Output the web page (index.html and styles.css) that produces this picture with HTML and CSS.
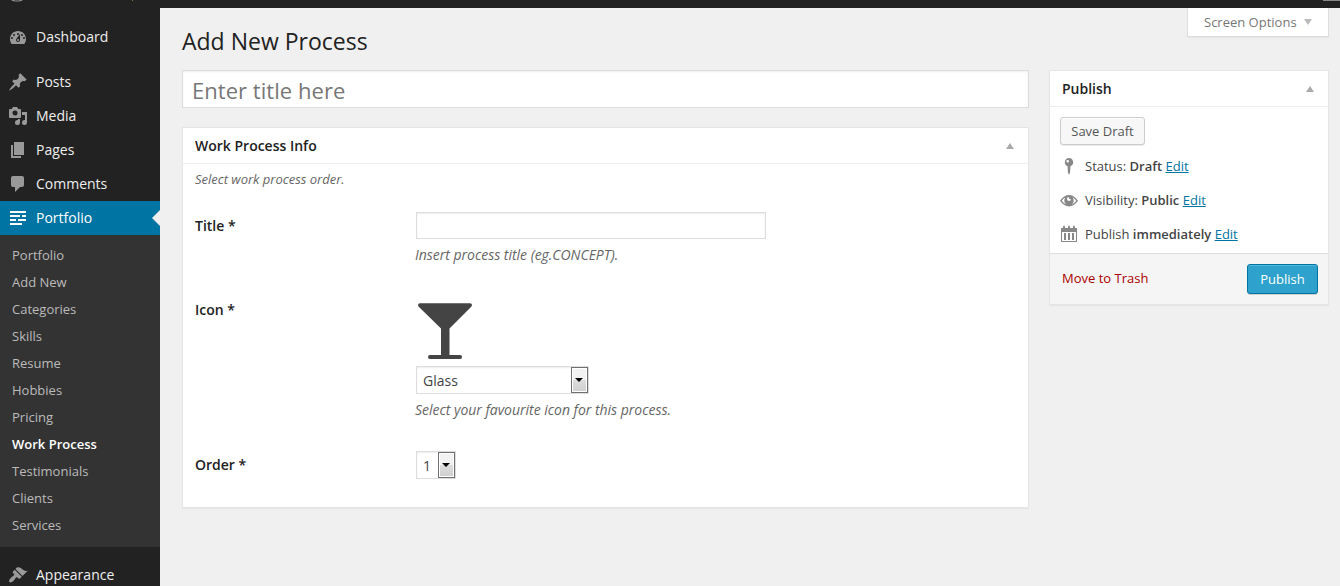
FILE: index.html
```html
<!DOCTYPE html>
<html lang="en">
<head>
<meta charset="utf-8">
<title>Add New Process</title>
<link rel="stylesheet" href="styles.css">
</head>
<body>
<div class="adminbar">
  <svg class="bar-logo" viewBox="0 0 14 2"><path d="M1 0Q3 1.6 7 1.6T13 0H10.500Q7 1.100 3.500 0Z"/></svg>
  <span class="bar-dot"></span>
  <span class="bar-avatar"></span>
</div>
<div class="layout">
  <nav class="sidebar">
    <a class="item"><svg class="ico" viewBox="0 0 20 20"><path fill-rule="evenodd" d="M3.760 17h12.480c1.100-1.370 1.760-3.110 1.760-5 0-4.420-3.580-8-8-8s-8 3.580-8 8c0 1.890.66 3.630 1.760 5zM10 6a1 1 0 1 1 0 2 1 1 0 0 1 0-2zM6 7a1 1 0 1 1 0 2 1 1 0 0 1 0-2zM14 7a1 1 0 1 1 0 2 1 1 0 0 1 0-2zM8.630 11.550L12 7v6a2 2 0 0 1-4 0c0-.57.24-1.080.63-1.450zM4 10a1 1 0 1 1 0 2 1 1 0 0 1 0-2zM16 10a1 1 0 1 1 0 2 1 1 0 0 1 0-2zM11 13a1 1 0 1 0-2 0 1 1 0 0 0 2 0z"/></svg><span>Dashboard</span></a>
    <a class="item gap"><svg class="ico" viewBox="0 0 20 20"><path d="M10.440 3.020l1.820-1.820 6.360 6.350-1.830 1.820c-1.050-.68-2.480-.57-3.410.36l-.75.750c-.92.930-1.040 2.350-.35 3.410l-1.830 1.820-2.410-2.410-2.800 2.790c-.42.420-3.380 2.710-3.800 2.290s1.860-3.390 2.280-3.810l2.790-2.790L4.100 9.360l1.830-1.820c1.050.69 2.480.57 3.400-.36l.750-.750c.930-.920 1.050-2.350.360-3.410z"/></svg><span>Posts</span></a>
    <a class="item"><svg class="ico" viewBox="0 0 20 20"><path fill-rule="evenodd" d="M13 11V4c0-.55-.45-1-1-1h-1.670L9 1H5L3.670 3H2c-.55 0-1 .45-1 1v7c0 .55.450 1 1 1h10c.55 0 1-.450 1-1zM7 4.500a2.500 2.500 0 1 1 0 5 2.500 2.500 0 0 1 0-5zM14 6h5v10.500a2.500 2.500 0 1 1-2-2.450V9h-3zM10 14.050V13h2v3.500a2.500 2.500 0 1 1-2-2.450z"/></svg><span>Media</span></a>
    <a class="item"><svg class="ico" viewBox="0 0 20 20"><path d="M6 15V2h10v13H6zM5 16h8v2H3V5h2v11z"/></svg><span>Pages</span></a>
    <a class="item"><svg class="ico" viewBox="0 0 20 20"><path d="M5 2h9q2 0 2 2v7q0 2-2 2h-2l-5 5v-5H5q-2 0-2-2V4q0-2 2-2z"/></svg><span>Comments</span></a>
    <a class="item current"><svg class="ico" viewBox="0 0 20 20"><path d="M18 3v2H2V3h16zM12 7v2H2V7h10zM18 7v2h-4V7h4zM8 11v2H2v-2h6zM18 11v2h-8v-2h8zM14 15v2H2v-2h12z"/></svg><span>Portfolio</span></a>
    <div class="submenu">
      <a>Portfolio</a><a>Add New</a><a>Categories</a><a>Skills</a><a>Resume</a><a>Hobbies</a><a>Pricing</a><a class="on">Work Process</a><a>Testimonials</a><a>Clients</a><a>Services</a>
    </div>
    <a class="item gap"><svg class="ico" viewBox="0 0 20 20"><path d="M14.480 11.060L7.410 3.990l1.500-1.500c.5-.560 2.300-.470 3.510.320 1.210.800 1.430 1.280 2.910 2.100 1.180.640 2.450 1.260 4.450.850zm-.710.710L6.700 4.700 4.930 6.470c-.390.390-.390 1.020 0 1.410l1.060 1.060c.390.390.390 1.030 0 1.420-.6.600-1.430 1.110-2.210 1.690-.350.260-.7.530-1.010.840C1.430 14.230.4 16.080 1.400 17.070c.990 1 2.840-.030 4.180-1.360.310-.310.580-.660.850-1.020.570-.780 1.080-1.610 1.690-2.210.390-.390 1.020-.390 1.410 0l1.060 1.060c.390.390 1.020.390 1.410 0z"/></svg><span>Appearance</span></a>
  </nav>
  <main class="content">
    <div class="primary">
      <h1>Add New Process</h1>
      <div class="title-input">Enter title here</div>
      <section class="box">
        <header class="box-head"><h2>Work Process Info</h2><i class="up"></i></header>
        <div class="box-body">
          <p class="intro">Select work process order.</p>
          <div class="field f-title"><label>Title *</label><div class="control"><div class="text-input"></div><p class="hint">Insert process title (eg.CONCEPT).</p></div></div>
          <div class="field f-icon"><label>Icon *</label><div class="control">
            <svg class="glass" viewBox="0 0 56 58"><path d="M3 1.300H53Q55 1.300 55 3 55 4 54 5L32.500 26.500V53H43Q45 53 45 55T43 57H13Q11 57 11 55T13 53H24V26.500L2 5Q1 4 1 3 1 1.300 3 1.300Z"/></svg>
            <div class="select wide"><span>Glass</span><b><i></i></b></div>
            <p class="hint">Select your favourite icon for this process.</p></div></div>
          <div class="field f-order"><label>Order *</label><div class="control"><div class="select"><span>1</span><b><i></i></b></div></div></div>
        </div>
      </section>
    </div>
    <aside class="side">
      <div class="screen-options"><span>Screen Options</span><i class="down"></i></div>
      <section class="box publish">
        <header class="box-head"><h2>Publish</h2><i class="up"></i></header>
        <div class="pub-body">
          <a class="btn">Save Draft</a>
          <div class="row"><svg viewBox="0 0 20 20"><path fill-rule="evenodd" d="M10 2a4.200 4.200 0 0 1 1.500 8.100L11 17l-1 1.500L9 17l-.5-6.900A4.200 4.200 0 0 1 10 2zM8.700 4a1.300 1.300 0 1 0 0 2.600 1.300 1.300 0 0 0 0-2.600z"/></svg><span>Status: <strong>Draft</strong> <a>Edit</a></span></div>
          <div class="row"><svg viewBox="0 0 20 20"><path fill-rule="evenodd" d="M1 10.800Q5 5 10 5t9 5.800Q15 16.500 10 16.500T1 10.800zM2.800 10.800Q4.500 13.200 7 14.500a5 5 0 0 1-.6-7Q4.300 8.600 2.800 10.800zM17.200 10.800Q15.700 8.600 13.600 7.500a5 5 0 0 1-.6 7q2.500-1.300 4.200-3.700zM9.800 7a2 2 0 1 0 2.200 2.200A2 2 0 0 1 9.800 7z"/></svg><span>Visibility: <strong>Public</strong> <a>Edit</a></span></div>
          <div class="row"><svg viewBox="0 0 20 20"><path fill-rule="evenodd" d="M2 4h2V3q0-1.500 1-1.500T6 3v1h3V3q0-1.500 1-1.500T11 3v1h3V3q0-1.500 1-1.500T16 3v1h2v14H2zM3 8v9h14V8zM5 9h2v7H5zM9 9h2v7H9zM13 9h2v7h-2z"/></svg><span>Publish <strong>immediately</strong> <a>Edit</a></span></div>
        </div>
        <footer class="pub-foot"><a class="trash">Move to Trash</a><a class="btn primary-btn">Publish</a></footer>
      </section>
    </aside>
  </main>
</div>
</body>
</html>
```
FILE: styles.css
```css
* { box-sizing: border-box; }
body { margin: 0; height: 586px; overflow: hidden; background: #f0f0f0; color: #444; font: 13px/20px "Open Sans", sans-serif; }
h1, h2, p { margin: 0; }
.adminbar { height: 8px; background: #222; display: flex; align-items: flex-start; padding-left: 10px; }
.bar-logo { width: 14px; height: 2px; fill: #999; }
.bar-dot { width: 1px; height: 1px; margin-left: 108px; background: #776f35; }
.bar-avatar { width: 17px; height: 1px; margin-left: auto; background: #888; }
.layout { display: flex; height: 578px; }
.sidebar { width: 160px; flex: none; background: #222; padding-top: 12px; overflow: hidden; }
.item { height: 34px; display: flex; align-items: center; gap: 8px; padding-left: 8px; color: #eee; font-size: 14px; position: relative; }
.item.gap { margin-top: 11px; }
.ico { width: 20px; height: 20px; fill: #999; flex: none; }
.current { background: #0074a2; color: #fff; }
.current .ico { fill: #fff; }
.current::after { content: ""; position: absolute; right: 0; top: 9px; border: 8px solid transparent; border-left-width: 0; border-right-color: #f0f0f0; }
.submenu { background: #333; height: 312px; padding: 7px 0 8px 12px; }
.submenu a { display: block; height: 27px; line-height: 26px; color: #bbb; }
.submenu .on { color: #fff; font-weight: 600; }
.content { flex: 1; display: flex; gap: 20px; padding: 0 11px 0 22px; }
.primary { width: 847px; }
h1 { font-size: 23px; font-weight: 400; line-height: 29px; padding-top: 19px; height: 62px; color: #222; }
.title-input { height: 38px; border: 1px solid #ddd; background: #fff; box-shadow: inset 0 1px 2px rgba(0,0,0,.07); font-size: 22px; letter-spacing: 0.04px; line-height: 38px; padding-left: 9px; color: #777; }
.box { background: #fff; border: 1px solid #e5e5e5; box-shadow: 0 1px 1px rgba(0,0,0,.04); }
.primary .box { margin-top: 19px; height: 381px; }
.box-head { height: 36px; border-bottom: 1px solid #eee; display: flex; align-items: center; justify-content: space-between; padding: 0 14px 0 12px; }
.box-head h2 { font-size: 14px; font-weight: 600; line-height: 20px; color: #222; }
.up { border: 4px solid transparent; border-top: 0; border-bottom: 6px solid #aaa; }
.box-body { padding: 5px 12px 0; }
.intro { font-size: 13px; font-style: italic; color: #666; }
.field { display: flex; }
.field label { width: 221px; font-size: 14px; font-weight: 600; color: #222; line-height: 20px; }
.f-title { margin-top: 23px; height: 87px; }
.f-icon { height: 152px; }
.f-title label { padding-top: 4px; }
.f-icon label { padding-top: 1px; }
.f-order label { padding-top: 4px; }
.text-input { width: 350px; height: 27px; border: 1px solid #ddd; box-shadow: inset 0 1px 2px rgba(0,0,0,.07); }
.hint { font-size: 14px; letter-spacing: -0.02px; font-style: italic; color: #666; margin: 6px 0 0 -1px; white-space: nowrap; }
.glass { display: block; width: 56px; height: 58px; margin: 3px 0 6px 1px; fill: #444; }
.select { width: 40px; height: 28px; border: 1px solid #ddd; background: #fff; box-shadow: inset 0 1px 2px rgba(0,0,0,.07); display: flex; justify-content: space-between; font-size: 14px; line-height: 27px; padding-left: 6px; }
.select.wide { width: 173px; }
.select b { width: 17px; height: 26px; border: 1px solid #707070; box-shadow: inset 0 0 0 1px #fff; background: linear-gradient(#f2f2f2 50%, #ddd 50%, #cfcfcf); display: flex; align-items: center; justify-content: center; }
.select b i { border: 4px solid transparent; border-bottom: 0; border-top-color: #000; margin-right: 1px; }
.side { width: 280px; flex: none; display: flex; flex-direction: column; }
.screen-options { align-self: flex-end; width: 142px; height: 29px; border: 1px solid #ddd; border-top: 0; background: #fff; box-shadow: 0 1px 1px rgba(0,0,0,.04); color: #777; display: flex; align-items: center; gap: 7px; padding-left: 16px; white-space: nowrap; }
.down { border: 4px solid transparent; border-bottom: 0; border-top: 6px solid #bbb; }
.publish { height: 235px; margin-top: 33px; }
.pub-body { height: 146px; padding: 10px 10px 0; }
.btn { display: block; width: 85px; height: 28px; border: 1px solid #ccc; border-radius: 3px; background: #f7f7f7; box-shadow: inset 0 1px 0 #fff, 0 1px 0 rgba(0,0,0,.08); color: #555; text-align: center; line-height: 27px; }
.row { height: 34px; display: flex; align-items: center; gap: 6px; }
.btn + .row { margin-top: 4px; }
.row svg { width: 20px; height: 20px; margin-left: -1px; fill: #888; flex: none; }
.row strong { font-weight: 600; }
.row a { color: #0074a2; text-decoration: underline; }
.pub-foot { height: 51px; background: #f5f5f5; border-top: 1px solid #ddd; display: flex; justify-content: space-between; align-items: center; padding: 0 10px 0 12px; }
.trash { color: #a00; padding-bottom: 2px; }
.primary-btn { width: 71px; height: 30px; line-height: 29px; background: #2ea2cc; border-color: #0074a2; color: #fff; box-shadow: inset 0 1px 0 rgba(120,200,230,.5), 0 1px 0 rgba(0,0,0,.15); }
```
